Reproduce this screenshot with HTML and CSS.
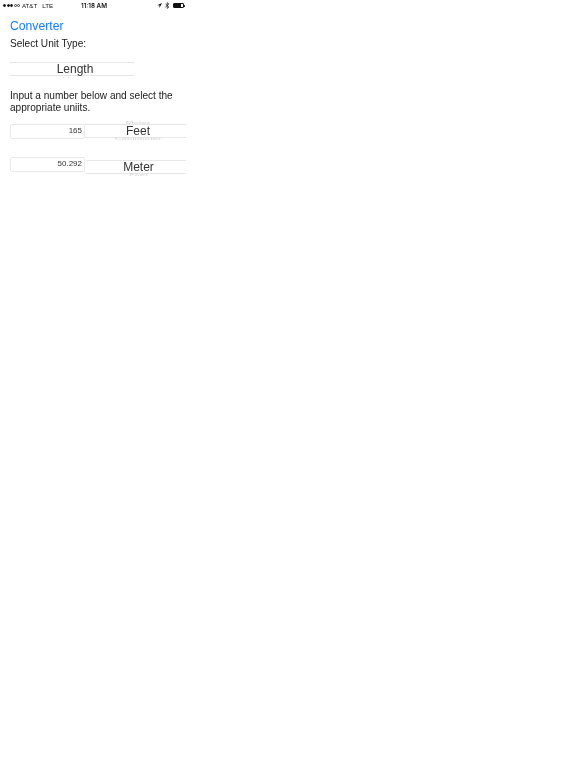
FILE: index.html
```html
<!DOCTYPE html>
<html lang="en">
<head>
<meta charset="utf-8">
<title>Converter</title>
<link rel="stylesheet" href="styles.css">
</head>
<body>
<div class="screen">
  <header class="status">
    <div class="status-left">
      <span class="signal"><i class="on"></i><i class="on"></i><i class="on"></i><i></i><i></i></span>
      <span class="carrier">AT&amp;T</span>
      <span class="network">LTE</span>
    </div>
    <div class="status-time">11:18 AM</div>
    <div class="status-right">
      <svg class="ic-loc" viewBox="0 0 6 6"><path d="M6 0 0 2.8h2.9V6z" fill="#111"/></svg>
      <svg class="ic-bt" viewBox="0 0 5 7"><path d="M.4 1.8 3.9 5 2.2 6.4V.6L3.9 2 .4 5.2" fill="none" stroke="#111" stroke-width=".7"/></svg>
      <span class="battery"><span class="battery-fill"></span></span><span class="battery-tip"></span>
    </div>
  </header>

  <main class="content">
    <h1 class="title">Converter</h1>
    <p class="label">Select Unit Type:</p>
    <div class="picker picker-type">
      <span class="picker-value">Length</span>
      <span class="ghost-dots"></span>
    </div>
    <p class="label instructions">Input a number below and select the appropriate uniits.</p>

    <div class="row row-first">
      <div class="field">165</div>
      <div class="picker picker-unit">
        <span class="ghost ghost-above">Meter</span>
        <span class="picker-value">Feet</span>
        <span class="ghost ghost-below">Centimeter</span>
      </div>
    </div>
    <div class="row row-second">
      <div class="field">50.292</div>
      <div class="picker picker-unit picker-low">
        <span class="picker-value">Meter</span>
        <span class="ghost ghost-below">Feet</span>
      </div>
    </div>
  </main>
</div>
</body>
</html>
```
FILE: styles.css
```css
html, body { margin: 0; padding: 0; background: #fff; }
body { width: 576px; height: 768px; overflow: hidden; font-family: "Liberation Sans", Arial, sans-serif; color: #1a1a1a; }
.screen { filter: blur(.25px); }

.status { display: grid; grid-template-columns: 1fr auto 1fr; align-items: center; width: 188px; height: 11px; font-size: 6.2px; color: #111; }
.status-left { display: flex; align-items: center; padding-left: 3px; }
.signal { display: flex; gap: .6px; margin-right: 1.5px; }
.signal i { width: 3px; height: 3px; border-radius: 50%; border: .5px solid #333; box-sizing: border-box; }
.signal i.on { background: #111; border-color: #111; }
.carrier { margin-right: 5px; }
.status-time { font-family: Inter, "Liberation Sans", sans-serif; font-weight: 600; font-size: 6.3px; }
.status-right { display: flex; align-items: center; justify-content: flex-end; padding-right: 3px; }
.ic-loc { width: 5px; height: 5px; margin-right: 3px; }
.ic-bt { width: 5px; height: 7px; margin-right: 3px; }
.battery { width: 11px; height: 5px; border: .5px solid #111; box-sizing: border-box; display: block; padding: .4px; border-radius: 1px; }
.battery-fill { display: block; width: 78%; height: 100%; background: #111; }
.battery-tip { width: 1px; height: 2px; background: #333; }

.content { padding-left: 10px; width: 176px; }
.title { margin: 7px 0 0; font-size: 12.2px; line-height: 16px; font-weight: 400; color: #147efb; }
.label { margin: 4px 0 0; font-size: 10.1px; line-height: 12px; color: #1a1a1a; }
.instructions { margin-top: 14px; }

.picker { position: relative; box-sizing: border-box; border-top: 1px solid #e6e6e6; border-bottom: 1px solid #e6e6e6; display: flex; justify-content: center; align-items: center; height: 14px; color: #333; }
.picker-value { font-size: 12px; line-height: 12px; }
.picker-type { width: 124px; margin-top: 12px; padding-left: 6px; }
.picker-unit { width: 101px; padding-left: 5px; }
.picker-low { margin-top: 3px; width: 100px; margin-left: 1px; }

.ghost { position: absolute; left: 5px; right: 0; text-align: center; font-size: 9.5px; line-height: 9px; color: #d2d2d2; transform: scaleY(.28); }
.ghost-above { top: -6px; }
.ghost-below { bottom: -7px; }
.ghost-dots { position: absolute; left: 53px; bottom: -3px; width: 1px; height: 1px; background: #d8d8d8; box-shadow: 5px 0 0 #d8d8d8; }

.row { display: flex; align-items: flex-start; }
.row-first { margin-top: 10px; }
.row-second { margin-top: 18.5px; }
.field { box-sizing: border-box; width: 75px; height: 15px; margin-top: -.5px; border: 1px solid #e8e8e8; border-radius: 2px; text-align: right; font-size: 8px; line-height: 12px; padding-right: 2px; color: #333; }
```
